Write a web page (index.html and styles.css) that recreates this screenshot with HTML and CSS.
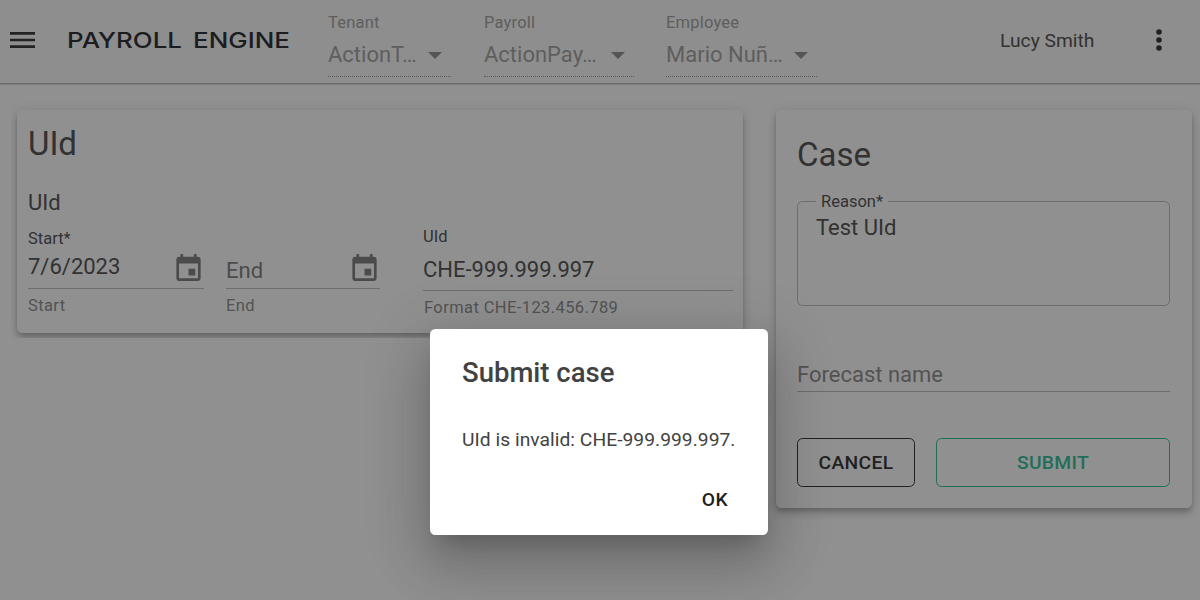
FILE: index.html
```html
<!DOCTYPE html>
<html lang="en">
<head>
<meta charset="utf-8">
<title>Payroll Engine</title>
<link rel="stylesheet" href="styles.css">
</head>
<body>
<header class="appbar">
  <svg class="menu-icon" viewBox="0 0 25 16"><path d="M0 0h25v2.7H0zM0 6.7h25v2.6H0zM0 13.3h25V16H0z"/></svg>
  <svg class="brand" width="224" height="24" viewBox="0 0 224 24"><text x="0" y="19.5" textLength="115" lengthAdjust="spacingAndGlyphs">PAYROLL</text><text x="126" y="19.5" textLength="97" lengthAdjust="spacingAndGlyphs">ENGINE</text></svg>
  <div class="select tenant"><label>Tenant</label><div class="value"><span>ActionT…</span><i class="caret"></i></div></div>
  <div class="select payroll"><label>Payroll</label><div class="value"><span>ActionPay…</span><i class="caret"></i></div></div>
  <div class="select employee"><label>Employee</label><div class="value"><span>Mario Nuñ…</span><i class="caret"></i></div></div>
  <span class="user">Lucy Smith</span>
  <svg class="more-icon" viewBox="0 0 6 22"><circle cx="3" cy="3" r="2.8"/><circle cx="3" cy="11" r="2.8"/><circle cx="3" cy="19" r="2.8"/></svg>
</header>
<main class="content">
  <div class="case-wrap">
    <section class="card case-card">
      <h1 class="title">UId</h1>
      <h2 class="subtitle">UId</h2>
      <div class="fields">
        <div class="field start">
          <label class="label">Start*</label>
          <div class="control"><span>7/6/2023</span>
            <svg class="calendar" viewBox="3 1 18 20"><path d="M19 3h-1V1h-2v2H8V1H6v2H5c-1.11 0-1.99.9-1.99 2L3 19c0 1.1.89 2 2 2h14c1.1 0 2-.9 2-2V5c0-1.1-.9-2-2-2zm0 16H5V8h14v11zm-2-7h-5v5h5z"/></svg>
          </div>
          <div class="helper">Start</div>
        </div>
        <div class="field end">
          <div class="control"><span class="placeholder">End</span>
            <svg class="calendar" viewBox="3 1 18 20"><path d="M19 3h-1V1h-2v2H8V1H6v2H5c-1.11 0-1.99.9-1.99 2L3 19c0 1.1.89 2 2 2h14c1.1 0 2-.9 2-2V5c0-1.1-.9-2-2-2zm0 16H5V8h14v11zm-2-7h-5v5h5z"/></svg>
          </div>
          <div class="helper">End</div>
        </div>
        <div class="field uid">
          <label class="label">UId</label>
          <div class="control"><span>CHE-999.999.997</span></div>
          <div class="helper">Format CHE-123.456.789</div>
        </div>
      </div>
    </section>
  </div>
  <section class="card side-card">
    <h1 class="title">Case</h1>
    <fieldset class="reason"><legend>Reason*</legend><div class="reason-text">Test UId</div></fieldset>
    <div class="forecast">Forecast name</div>
    <div class="actions"><button class="btn cancel">CANCEL</button><button class="btn submit">SUBMIT</button></div>
  </section>
</main>
<div class="overlay">
  <div class="dialog">
    <h3 class="dialog-title">Submit case</h3>
    <p class="dialog-text">UId is invalid: CHE-999.999.997.</p>
    <button class="ok">OK</button>
  </div>
</div>
</body>
</html>
```

FILE: styles.css
```css
* { box-sizing: border-box; }
body {
  margin: 0;
  height: 600px;
  overflow: hidden;
  background: #fff;
  color: #424242;
  font-family: Roboto, sans-serif;
}
h1, h2, h3, p { margin: 0; font-weight: 400; }
button { font-family: inherit; background: none; border: 0; padding: 0; }

.appbar {
  display: flex;
  align-items: flex-start;
  height: 83px;
  padding-left: 10px;
  background: #fafafa;
  box-shadow: 0 1px 0 #b2b2b2, 0 2px 1px #dedede;
}
.menu-icon { width: 25px; height: 16px; margin-top: 32px; }
.brand { margin: 28px 0 0 32px; fill: #15181f; font: 500 21.5px Inter, sans-serif; }
.menu-icon, .more-icon { fill: #222; }
.select { height: 77px; padding-top: 13px; border-bottom: 1px dotted #929292; color: #9a9a9a; }
.select label { display: block; font-size: 16.5px; line-height: 20px; letter-spacing: .2px; }
.value { display: flex; justify-content: space-between; align-items: center; height: 30px; margin-top: 7px; padding-right: 9px; font-size: 22px; line-height: 30px; white-space: nowrap; }
.caret { border: 7px solid transparent; border-top-color: #888; border-bottom: 0; margin-top: 1px; }
.tenant { width: 123px; margin-left: 37px; }
.payroll { width: 150px; margin-left: 33px; }
.employee { width: 151px; margin-left: 32px; }
.user { margin: 28px 0 0 183px; font-size: 19.25px; line-height: 25px; }
.more-icon { width: 6px; height: 22px; margin: 29px 0 0 62px; }

.content { display: flex; align-items: flex-start; }
.case-wrap { width: 749px; height: 255px; margin-left: 11px; padding: 27px 0 0 6px; overflow: hidden; }
.card {
  background: #fff;
  border-radius: 5.5px;
  box-shadow: 0 2.75px 5.5px -1.4px rgba(0,0,0,.2), 0 5.5px 7px rgba(0,0,0,.14), 0 1.4px 14px rgba(0,0,0,.12);
}
.case-card { width: 726px; height: 223px; padding: 12px 11px; }
.title { font-size: 33px; line-height: 44px; }
.subtitle { margin-top: 22px; font-size: 22px; line-height: 30px; }
.fields { display: flex; margin-top: 7px; }
.field { display: flex; flex-direction: column; flex-shrink: 0; }
.start { width: 176px; }
.end { width: 154px; margin-left: 22px; padding-top: 22px; }
.uid { width: 310px; margin-left: 43px; }
.label { height: 22px; padding-top: 2px; font-size: 16.5px; line-height: 20px; }
.control { display: flex; justify-content: space-between; height: 42px; padding: 6px 3px 0 0; border-bottom: 1px solid #b8b8b8; font-size: 22px; line-height: 26px; }
.start .label { padding-top: 4px; }
.start .control { padding-top: 10px; margin-top: -3px; height: 45px; }
.end .control { margin-top: -3px; height: 45px; padding-top: 14px; }
.uid .control { height: 44px; padding-top: 10px; }
.placeholder { color: #757575; }
.calendar { width: 25px; height: 27px; fill: #757575; }
.end .calendar { margin-top: -4px; }
.helper { margin-top: 7px; font-size: 16.5px; line-height: 20px; letter-spacing: .4px; color: #858585; }
.uid .helper { padding-left: 1px; }

.side-card { width: 416px; height: 398px; margin: 27px 0 0 16px; padding: 23px 22px 0 21px; }
.reason { height: 115px; margin: 14px 0 0; padding: 3px 0 0 18px; border: 1px solid #b8b8b8; border-radius: 5.5px; }
.reason legend { padding: 2px 5px 0; font-size: 16.5px; line-height: 18px; }
.reason-text { font-size: 22px; line-height: 28px; }
.forecast { height: 32px; margin-top: 54px; padding-top: 1px; border-bottom: 1px solid #b8b8b8; font-size: 22px; line-height: 28px; color: #858585; }
.actions { display: flex; gap: 21px; margin-top: 46px; }
.btn { height: 49px; border: 1px solid; border-radius: 5.5px; font-size: 19.25px; font-weight: 500; letter-spacing: .35px; }
.cancel { width: 118px; color: #212121; }
.submit { width: 234px; color: #1bbb91; }

.overlay { position: absolute; inset: 0; background: rgba(33,33,33,.5); }
.dialog {
  position: absolute;
  left: 430px;
  top: 329px;
  width: 338px;
  height: 206px;
  padding: 26px 32px 0;
  display: flex;
  flex-direction: column;
  background: #fff;
  border-radius: 5.5px;
  box-shadow: 0 15px 21px -10px rgba(0,0,0,.2), 0 33px 52px 4px rgba(0,0,0,.14), 0 12px 63px 11px rgba(0,0,0,.12);
}
.dialog-title { font-size: 27.5px; line-height: 36px; font-weight: 500; }
.dialog-text { margin-top: 36px; font-size: 19.25px; line-height: 26px; letter-spacing: .03px; white-space: nowrap; }
.ok { align-self: flex-end; margin: 34px 8px 0 0; color: #212121; font-size: 19.25px; line-height: 26px; font-weight: 500; letter-spacing: .35px; }
```
